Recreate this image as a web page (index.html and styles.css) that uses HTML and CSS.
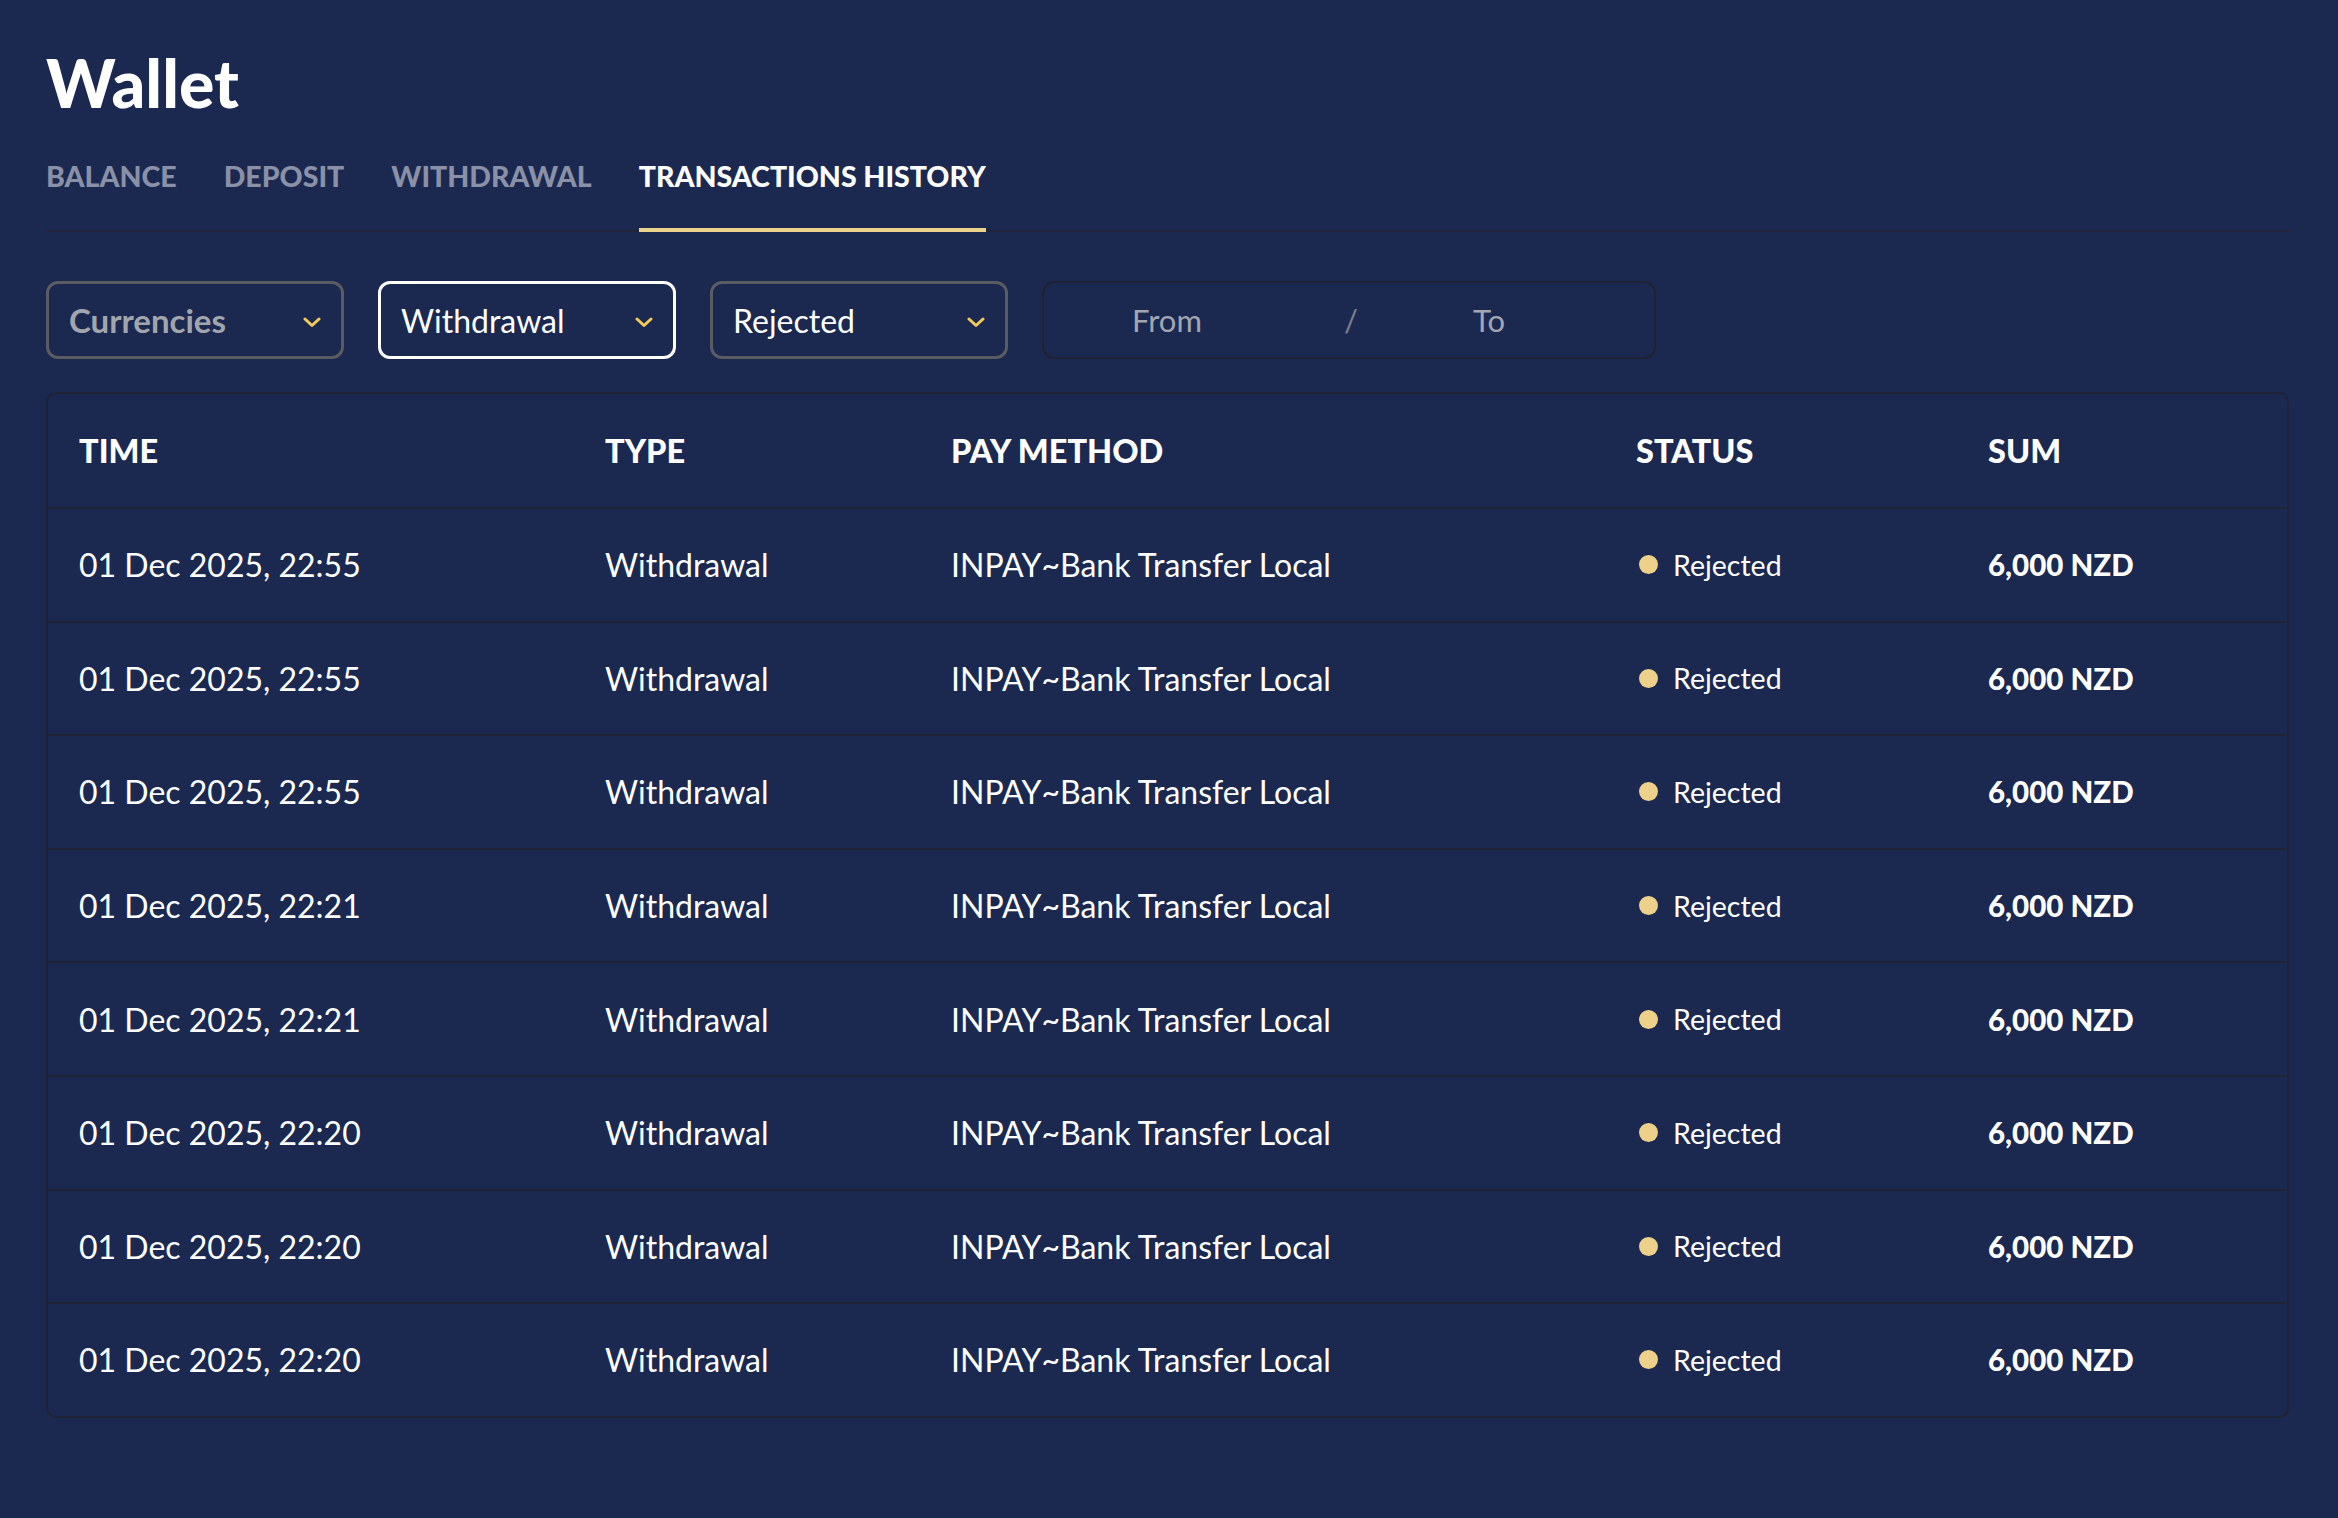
FILE: index.html
```html
<!DOCTYPE html>
<html lang="en">
<head>
    <meta charset="UTF-8">
    <meta name="viewport" content="width=device-width, initial-scale=1.0">
    <title>Wallet</title>
    <link rel="stylesheet" href="styles.css">
</head>
<body>
    <div class="page">
        <h1 class="title">Wallet</h1>

        <div class="tabs">
            <div class="tab">BALANCE</div>
            <div class="tab">DEPOSIT</div>
            <div class="tab">WITHDRAWAL</div>
            <div class="tab active">TRANSACTIONS HISTORY</div>
        </div>

        <div class="filters">
            <div class="select select-muted">
                <span>Currencies</span>
                <svg class="chevron" width="18" height="11" viewBox="0 0 18 11"><polyline points="2,2 9,8.5 16,2" fill="none" stroke="#f3c95a" stroke-width="3" stroke-linecap="round" stroke-linejoin="round"/></svg>
            </div>
            <div class="select select-active">
                <span>Withdrawal</span>
                <svg class="chevron" width="18" height="11" viewBox="0 0 18 11"><polyline points="2,2 9,8.5 16,2" fill="none" stroke="#f3c95a" stroke-width="3" stroke-linecap="round" stroke-linejoin="round"/></svg>
            </div>
            <div class="select">
                <span>Rejected</span>
                <svg class="chevron" width="18" height="11" viewBox="0 0 18 11"><polyline points="2,2 9,8.5 16,2" fill="none" stroke="#f3c95a" stroke-width="3" stroke-linecap="round" stroke-linejoin="round"/></svg>
            </div>
            <div class="dates">
                <span class="date-from">From</span>
                <span class="date-sep">/</span>
                <span class="date-to">To</span>
            </div>
        </div>

        <div class="history">
            <div class="row head">
                <div>TIME</div>
                <div>TYPE</div>
                <div>PAY METHOD</div>
                <div>STATUS</div>
                <div>SUM</div>
            </div>
            <div class="row">
                <div>01 Dec 2025, 22:55</div>
                <div>Withdrawal</div>
                <div>INPAY~Bank Transfer Local</div>
                <div class="status"><span class="dot"></span>Rejected</div>
                <div class="sum">6,000 NZD</div>
            </div>
            <div class="row">
                <div>01 Dec 2025, 22:55</div>
                <div>Withdrawal</div>
                <div>INPAY~Bank Transfer Local</div>
                <div class="status"><span class="dot"></span>Rejected</div>
                <div class="sum">6,000 NZD</div>
            </div>
            <div class="row">
                <div>01 Dec 2025, 22:55</div>
                <div>Withdrawal</div>
                <div>INPAY~Bank Transfer Local</div>
                <div class="status"><span class="dot"></span>Rejected</div>
                <div class="sum">6,000 NZD</div>
            </div>
            <div class="row">
                <div>01 Dec 2025, 22:21</div>
                <div>Withdrawal</div>
                <div>INPAY~Bank Transfer Local</div>
                <div class="status"><span class="dot"></span>Rejected</div>
                <div class="sum">6,000 NZD</div>
            </div>
            <div class="row">
                <div>01 Dec 2025, 22:21</div>
                <div>Withdrawal</div>
                <div>INPAY~Bank Transfer Local</div>
                <div class="status"><span class="dot"></span>Rejected</div>
                <div class="sum">6,000 NZD</div>
            </div>
            <div class="row">
                <div>01 Dec 2025, 22:20</div>
                <div>Withdrawal</div>
                <div>INPAY~Bank Transfer Local</div>
                <div class="status"><span class="dot"></span>Rejected</div>
                <div class="sum">6,000 NZD</div>
            </div>
            <div class="row">
                <div>01 Dec 2025, 22:20</div>
                <div>Withdrawal</div>
                <div>INPAY~Bank Transfer Local</div>
                <div class="status"><span class="dot"></span>Rejected</div>
                <div class="sum">6,000 NZD</div>
            </div>
            <div class="row">
                <div>01 Dec 2025, 22:20</div>
                <div>Withdrawal</div>
                <div>INPAY~Bank Transfer Local</div>
                <div class="status"><span class="dot"></span>Rejected</div>
                <div class="sum">6,000 NZD</div>
            </div>
        </div>
    </div>
</body>
</html>
```

FILE: styles.css
```css
body {
    margin: 0;
    background-color: #1b2951;
    color: #fff;
    font-family: Lato, "Open Sans", sans-serif;
}
.page {
    padding: 44px 49px 60px 46px;
}
.title {
    margin: 0;
    font-size: 66px;
    font-weight: 900;
    line-height: 78px;
}
.tabs {
    display: flex;
    gap: 47px;
    margin-top: 37px;
    border-bottom: 2px solid #22253a;
}
.tab {
    font-size: 28.5px;
    font-weight: 900;
    color: #8a90a6;
    line-height: 34px;
    padding-bottom: 37px;
    cursor: pointer;
}
.tab.active {
    color: #fff;
    border-bottom: 4px solid #edd28c;
    margin-bottom: -2px;
    padding-bottom: 33px;
}
.filters {
    display: flex;
    gap: 34px;
    margin-top: 49px;
}
.select {
    box-sizing: border-box;
    width: 298px;
    height: 78px;
    border: 3px solid #5b5c62;
    border-radius: 12px;
    display: flex;
    align-items: center;
    justify-content: space-between;
    padding: 0 20px 0 20px;
    font-size: 32px;
    color: #fff;
}
.select-muted {
    color: #a3a5ad;
    font-weight: 700;
    font-size: 33px;
}
.select-active {
    border-color: #fff;
}
.chevron {
    margin-top: 4px;
}
.dates {
    box-sizing: border-box;
    width: 614px;
    height: 78px;
    border: 2px solid #1f2231;
    border-radius: 12px;
    display: flex;
    align-items: center;
    padding-left: 88px;
    font-size: 31px;
    color: #a3a6b0;
}
.date-from {
    width: 212px;
}
.date-sep {
    width: 129px;
    color: #7c7f8a;
}
.history {
    margin-top: 33px;
    border: 2px solid #1f2333;
    border-radius: 10px;
}
.row {
    display: grid;
    grid-template-columns: 526px 346px 685px 352px 1fr;
    align-items: center;
    height: 111.6px;
    padding-left: 31px;
    border-bottom: 2px solid #1f2333;
    font-size: 32px;
}
.row:last-child {
    border-bottom: none;
}
.row.head {
    height: 113px;
    font-weight: 900;
    font-size: 32.5px;
}
.status {
    display: flex;
    align-items: center;
    font-size: 28.5px;
}
.dot {
    width: 19px;
    height: 19px;
    border-radius: 50%;
    background-color: #edd08a;
    margin: 0 15px 0 3px;
}
.sum {
    font-weight: 900;
    font-size: 29.5px;
}
```
